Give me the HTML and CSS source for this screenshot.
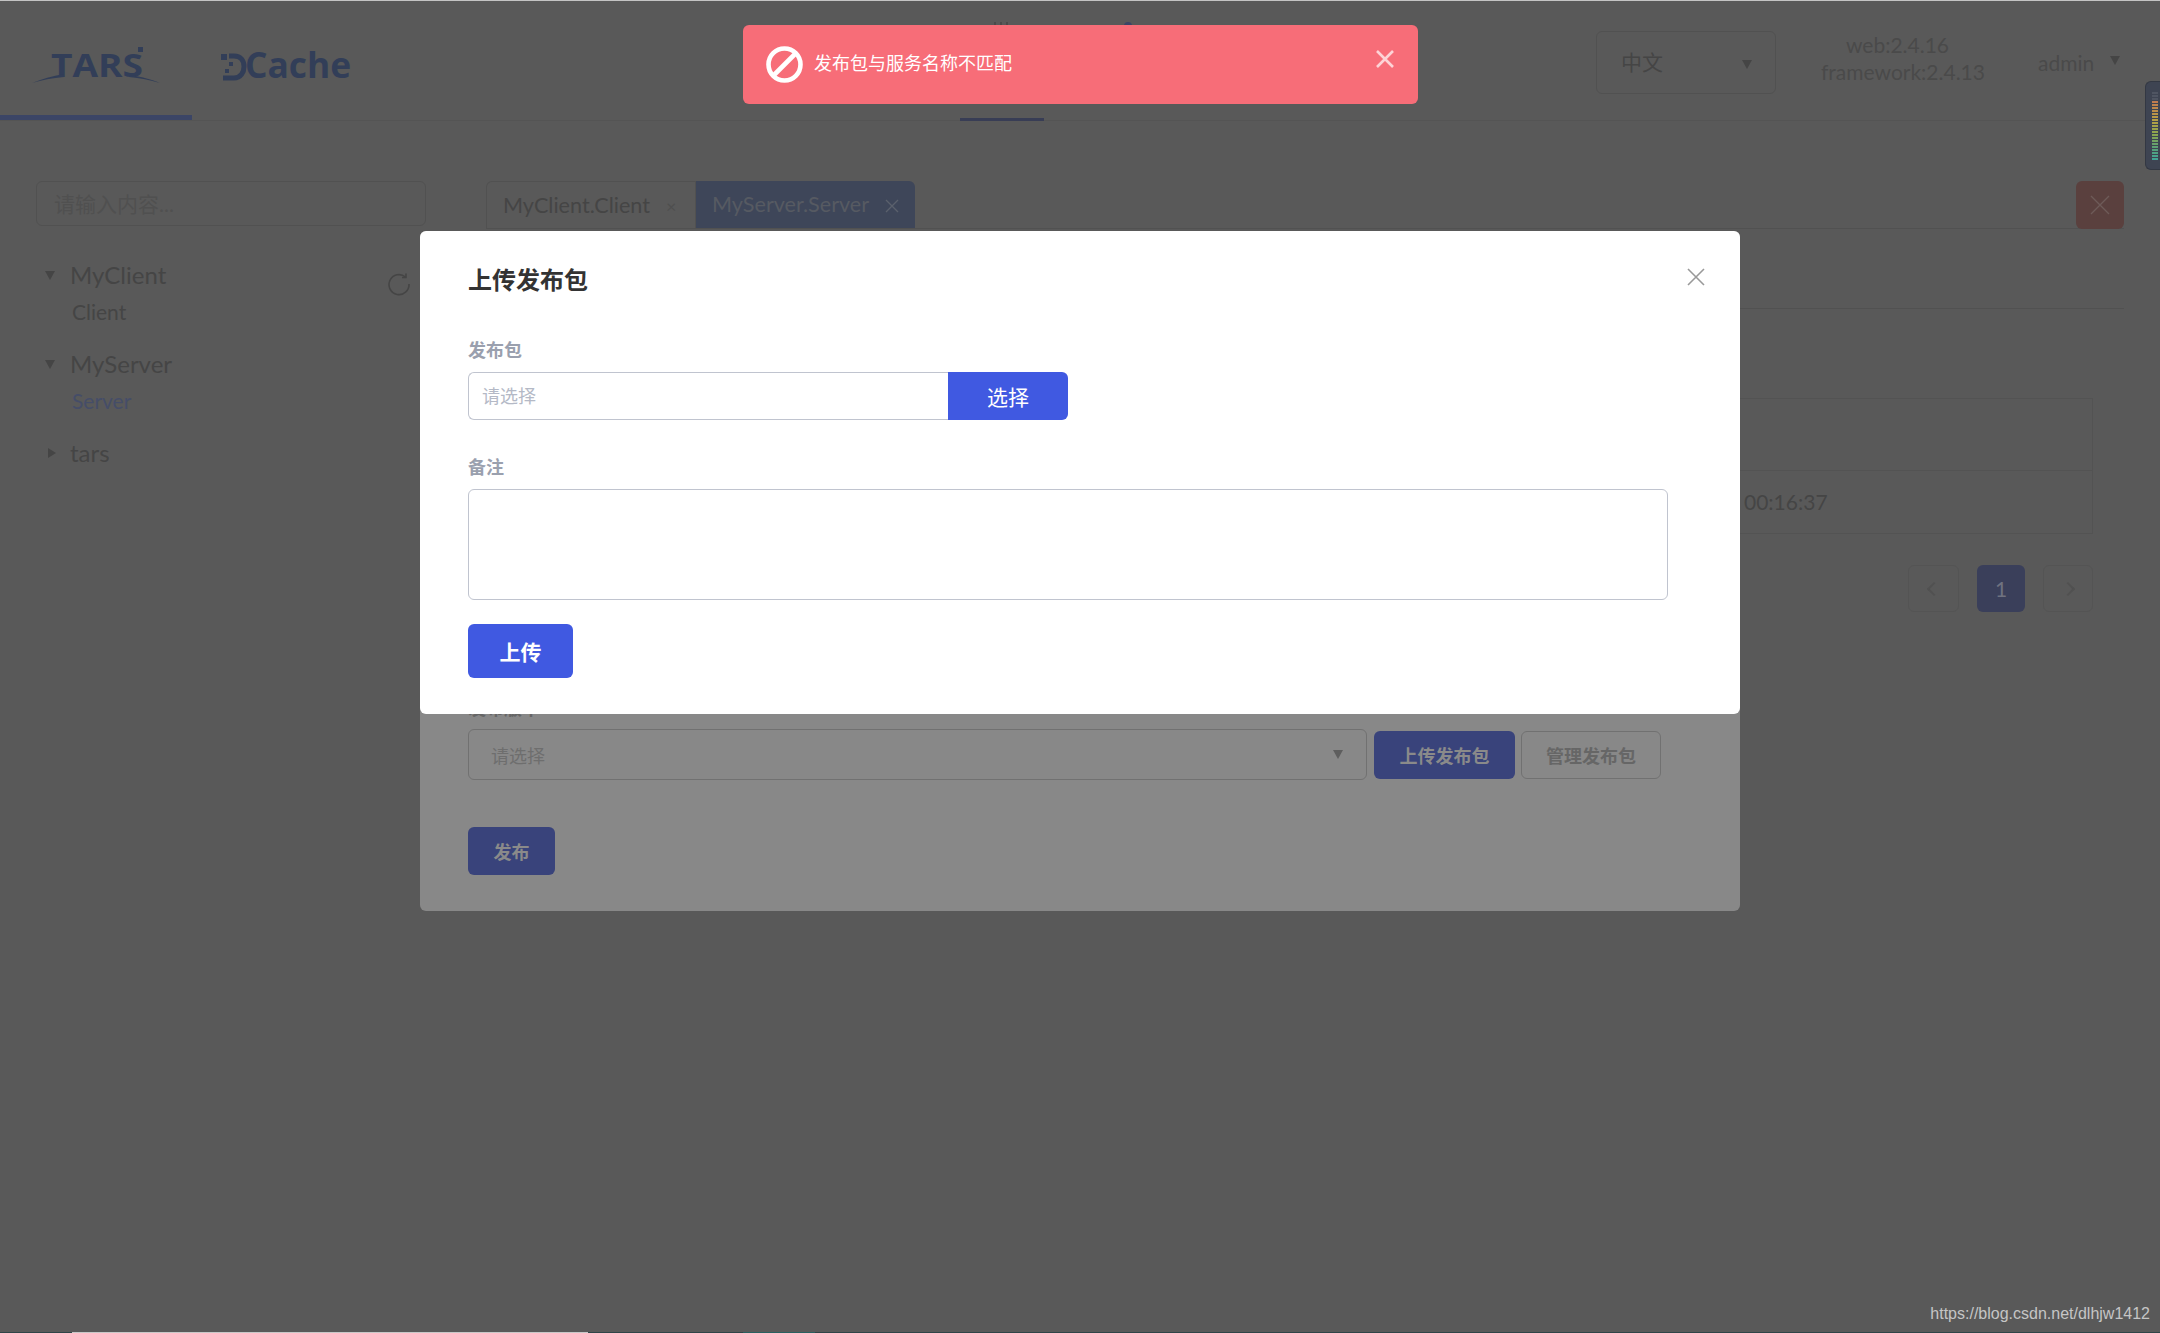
FILE: index.html
```html
<!DOCTYPE html>
<html lang="zh-CN">
<head>
    <meta charset="UTF-8">
    <title>TARS</title>
    <link rel="stylesheet" href="styles.css">
</head>
<body>
    <div class="page">
        <div class="header">
            <div class="brand-tab active">
                <svg width="130" height="64" viewBox="0 -17 130 64">
                    <text x="19" y="30" class="logo-tars-text" textLength="92" lengthAdjust="spacingAndGlyphs">TARS</text>
                    <rect x="106" y="0" width="5" height="5"/>
                    <path d="M0 36 C10 32 20 29 32 27 L32 30 C20 31 10 33 0 36 Z"/>
                    <path d="M128 36 C118 32 110 30 98 28 L97 30 C108 31 118 33 128 36 Z"/>
                </svg>
            </div>
            <div class="brand-tab second">
                <svg width="132" height="64" viewBox="0 -17 132 64">
                    <rect x="1" y="2" width="6" height="6"/>
                    <rect x="9" y="10" width="4" height="4"/>
                    <rect x="5" y="17" width="4" height="4"/>
                    <path class="logo-d" d="M9 4 H14 C21 4 24 9 24 14.5 C24 20 21 26 14 26 H3"/>
                    <text x="25" y="26" class="logo-cache-text" textLength="106" lengthAdjust="spacingAndGlyphs">Cache</text>
                </svg>
            </div>
            <div class="nav">
                <div class="nav-item active"><span class="nav-bars"></span></div>
                <div class="nav-item"><span class="nav-dot"></span></div>
            </div>
            <div class="lang-select">
                <span>中文</span>
                <i class="caret"></i>
            </div>
            <div class="version">
                <div class="version-web">web:2.4.16</div>
                <div>framework:2.4.13</div>
            </div>
            <div class="user">
                <span>admin</span>
                <i class="caret"></i>
            </div>
        </div>

        <div class="main">
            <div class="sidebar">
                <div class="search-box">请输入内容...</div>
                <div class="tree">
                    <svg class="refresh" width="24" height="24" viewBox="0 0 24 24">
                        <path d="M18.5 5 A10 10 0 1 0 22 12"/>
                        <path d="M19 1.5 V5.5 H15"/>
                    </svg>
                    <div class="tree-node"><i class="caret"></i>MyClient</div>
                    <div class="tree-leaf">Client</div>
                    <div class="tree-node"><i class="caret"></i>MyServer</div>
                    <div class="tree-leaf current">Server</div>
                    <div class="tree-node"><i class="caret closed"></i>tars</div>
                </div>
            </div>

            <div class="content">
                <div class="tabs">
                    <div class="tab">MyClient.Client<span class="tab-x">×</span></div>
                    <div class="tab current">MyServer.Server
                        <svg class="tab-close" width="14" height="14" viewBox="0 0 14 14"><path d="M1 1 L13 13 M13 1 L1 13"/></svg>
                    </div>
                    <div class="close-all">
                        <svg width="22" height="22" viewBox="0 0 22 22"><path d="M2 2 L20 20 M20 2 L2 20"/></svg>
                    </div>
                </div>
                <div class="subnav"></div>
                <div class="table">
                    <div class="table-head"></div>
                    <div class="table-row">00:16:37</div>
                </div>
                <div class="pager">
                    <div class="pager-btn arrow"><i class="chevron left"></i></div>
                    <div class="pager-btn current">1</div>
                    <div class="pager-btn arrow next"><i class="chevron right"></i></div>
                </div>
            </div>
        </div>
    </div>

    <!-- publish dialog, dimmed by the upload dialog on top of it -->
    <div class="dialog dialog-back">
        <div class="back-label">发布版本</div>
        <div class="back-row">
            <div class="back-select">
                <span>请选择</span>
                <i class="caret"></i>
            </div>
            <div class="btn btn-back">上传发布包</div>
            <div class="btn btn-back-plain">管理发布包</div>
        </div>
        <div class="btn btn-back publish">发布</div>
    </div>

    <div class="dialog dialog-upload">
        <svg class="dialog-close" width="18" height="18" viewBox="0 0 18 18"><path d="M1 1 L17 17 M17 1 L1 17"/></svg>
        <div class="dialog-title">上传发布包</div>
        <label class="field-label">发布包</label>
        <div class="file-picker">
            <input class="file-input" type="text" placeholder="请选择">
            <div class="btn-pick">选择</div>
        </div>
        <label class="field-label second">备注</label>
        <textarea class="note"></textarea>
        <div class="btn-upload">上传</div>
    </div>

    <div class="toast">
        <svg class="toast-icon" width="37" height="37" viewBox="0 0 37 37">
            <circle cx="18.5" cy="18.5" r="16"/>
            <path d="M7 30 L30 7"/>
        </svg>
        <span class="toast-text">发布包与服务名称不匹配</span>
        <svg class="toast-close" width="20" height="20" viewBox="0 0 20 20"><path d="M2 2 L18 18 M18 2 L2 18"/></svg>
    </div>

    <div class="meter"><div class="meter-leds"></div></div>
    <div class="watermark">https://blog.csdn.net/dlhjw1412</div>

    <div class="taskbar">
        <span class="task-a"></span>
        <span class="task-b"></span>
        <span class="task-c"></span>
        <span class="task-d"></span>
        <span class="task-e"></span>
    </div>
</body>
</html>
```

FILE: styles.css
```css
* {
    box-sizing: border-box;
}

html, body {
    height: 100%;
}

body {
    margin: 0;
    position: relative;
    overflow: hidden;
    height: 1333px;
    background-color: #595959;
    color: #454545;
    font-family: 'Lato', 'Noto Sans CJK SC', sans-serif;
    font-size: 21px;
    border-top: 1px solid #c4c4c4;
}

.caret {
    display: inline-block;
    width: 0;
    height: 0;
    border-left: 5px solid transparent;
    border-right: 5px solid transparent;
    border-top: 9px solid #454545;
}

.caret.closed {
    border-top: 5px solid transparent;
    border-bottom: 5px solid transparent;
    border-left: 8px solid #454545;
    border-right: 0;
}

/* header */
.header {
    display: flex;
    height: 120px;
    border-bottom: 1px solid #545454;
    align-items: center;
}

.brand-tab {
    height: 119px;
    display: flex;
    align-items: center;
    fill: #323e58;
}

.brand-tab svg {
    overflow: visible;
}

.brand-tab.active {
    width: 192px;
    border-bottom: 5px solid #3b4566;
    padding-left: 32px;
    padding-top: 8px;
}

.brand-tab.second {
    width: 190px;
    padding-top: 12px;
    padding-left: 28px;
}

.logo-tars-text {
    font-family: 'Open Sans', sans-serif;
    font-size: 33px;
    font-weight: 700;
}

.logo-cache-text {
    font-family: 'Open Sans', sans-serif;
    font-size: 35px;
    font-weight: 700;
}

.logo-d {
    fill: none;
    stroke: #323e58;
    stroke-width: 5;
}

.nav {
    display: flex;
    gap: 42px;
    margin-left: 578px;
    align-self: stretch;
}

.nav-item {
    width: 84px;
    height: 120px;
    padding-top: 21px;
    display: flex;
    justify-content: center;
}

.nav-item.active {
    border-bottom: 3px solid #383d55;
}

.nav-bars {
    width: 16px;
    height: 8px;
    background: repeating-linear-gradient(90deg, #4a4a4a 0 2px, transparent 2px 6px);
}

.nav-dot {
    width: 8px;
    height: 8px;
    border-radius: 50%;
    background-color: #3b4566;
}

.lang-select {
    width: 180px;
    height: 63px;
    margin-left: 426px;
    margin-top: 4px;
    padding: 0 23px 0 24px;
    border: 1px solid #515151;
    border-radius: 6px;
    display: flex;
    align-items: center;
    justify-content: space-between;
}

.lang-select span {
    margin-top: -4px;
}

.lang-select .caret {
    margin-top: 3px;
}

.version {
    margin-left: 45px;
    margin-bottom: 5px;
    width: 164px;
    line-height: 27px;
    text-align: center;
    color: #4a4a4a;
    white-space: nowrap;
}

.version-web {
    padding-right: 11px;
}

.user {
    margin-left: 53px;
    margin-top: 3px;
    color: #4a4a4a;
    display: flex;
    align-items: center;
    gap: 16px;
}

.user .caret {
    margin-top: -4px;
}

/* page body */
.main {
    display: flex;
    padding: 60px 36px 0;
    gap: 60px;
}

.sidebar {
    width: 390px;
    flex-shrink: 0;
}

.search-box {
    height: 45px;
    border: 1px solid #515151;
    border-radius: 6px;
    padding: 0 17px;
    line-height: 43px;
    color: #505050;
}

.tree {
    position: relative;
    padding-top: 28px;
}

.refresh {
    position: absolute;
    left: 351px;
    top: 46px;
    fill: none;
    stroke: #454545;
    stroke-width: 1.6;
}

.tree-node {
    display: flex;
    align-items: center;
    height: 40px;
    font-size: 24px;
    margin-top: 0;
}

.tree-node .caret {
    margin: 2px 15px 0 9px;
}

.tree-node .caret.closed {
    margin: 2px 14px 0 12px;
}

.tree-leaf {
    height: 49px;
    padding-left: 36px;
    line-height: 36px;
}

.tree-leaf.current {
    color: #454d68;
}

.content {
    flex: 1;
    min-width: 0;
}

.tabs {
    display: flex;
    height: 48px;
    border-bottom: 1px solid #515151;
}

.tab {
    height: 47px;
    padding-left: 16px;
    line-height: 47px;
    font-size: 21.6px;
    border: 1px solid #515151;
    border-bottom: 0;
    width: 210px;
    border-radius: 6px 0 0 0;
    color: #454545;
    white-space: nowrap;
}

.tab-x {
    margin-left: 16px;
    color: #4f4f4f;
    font-size: 18px;
}

.tab.current {
    width: 219px;
    padding-left: 16px;
    background-color: #3e4659;
    color: #565a62;
    border: 0;
    border-radius: 0 6px 0 0;
}

.tab-close {
    margin-left: 11px;
    fill: none;
    stroke: #5a606c;
    stroke-width: 1.4;
    vertical-align: -1px;
}

.close-all {
    margin-left: auto;
    width: 48px;
    height: 48px;
    background-color: #5a403e;
    border-radius: 6px;
    display: flex;
    align-items: center;
    justify-content: center;
}

.close-all svg {
    fill: none;
    stroke: #6e5a58;
    stroke-width: 1.4;
}

.subnav {
    height: 80px;
    border-bottom: 1px solid #515151;
}

.table {
    margin: 89px 31px 0;
    border: 1px solid #535353;
}

.table-head {
    height: 72px;
    border-bottom: 1px solid #535353;
}

.table-row {
    height: 62px;
    line-height: 62px;
    padding-left: 1226px;
    color: #454545;
}

.pager {
    display: flex;
    justify-content: flex-end;
    gap: 18px;
    margin: 31px 31px 0 0;
}

.pager-btn {
    width: 51px;
    height: 47px;
    border: 1px solid #545454;
    border-radius: 6px;
    display: flex;
    align-items: center;
    justify-content: center;
}

.pager-btn.next {
    width: 50px;
}

.pager-btn.current {
    width: 48px;
    border: 0;
    background-color: #3a3f5a;
    color: #6f7280;
}

.chevron {
    width: 10px;
    height: 10px;
    border-left: 2px solid #515151;
    border-bottom: 2px solid #515151;
}

.chevron.left {
    transform: rotate(45deg);
}

.chevron.right {
    transform: rotate(225deg);
}

/* dialogs */
.dialog {
    position: absolute;
    left: 420px;
    top: 230px;
    width: 1320px;
    padding: 0 48px;
    border-radius: 6px;
}

.dialog-back {
    height: 680px;
    background-color: #888888;
    padding-bottom: 36px;
    display: flex;
    flex-direction: column;
    justify-content: flex-end;
    align-items: flex-start;
}

.back-label {
    height: 24px;
    line-height: 24px;
    font-size: 18px;
    font-weight: 700;
    color: #666;
    margin-bottom: 9px;
}

.back-row {
    display: flex;
    align-items: center;
    margin-bottom: 47px;
}

.back-select {
    width: 899px;
    height: 51px;
    border: 1px solid #717171;
    border-radius: 6px;
    padding: 0 22px;
    font-size: 18px;
    color: #6e6e6e;
    display: flex;
    align-items: center;
    justify-content: space-between;
}

.back-select .caret {
    border-top-color: #5e5e5e;
    margin-right: 1px;
}

.btn {
    height: 48px;
    border-radius: 6px;
    font-size: 18px;
    font-weight: 700;
    display: flex;
    align-items: center;
    justify-content: center;
}

.btn-back {
    width: 141px;
    margin-left: 7px;
    background-color: #39437b;
    color: #8a8a8a;
}

.btn-back-plain {
    width: 140px;
    margin-left: 6px;
    border: 1px solid #717171;
    color: #666;
}

.btn-back.publish {
    width: 87px;
    margin-left: 0;
}

.dialog-upload {
    height: 483px;
    background-color: #fff;
    color: #333;
    padding-top: 31px;
}

.dialog-close {
    position: absolute;
    right: 35px;
    top: 37px;
    fill: none;
    stroke: #999;
    stroke-width: 1.6;
}

.dialog-title {
    font-size: 24px;
    font-weight: 700;
    line-height: 36px;
}

.field-label {
    display: block;
    margin-top: 40px;
    font-size: 18px;
    font-weight: 700;
    line-height: 24px;
    color: #9aa0ae;
}

.field-label.second {
    margin-top: 35px;
}

.file-picker {
    display: flex;
    width: 600px;
    height: 48px;
    margin-top: 10px;
}

.file-input {
    flex: 1;
    min-width: 0;
    padding: 0 13px;
    border: 1px solid #c0c4cf;
    border-right: 0;
    border-radius: 6px 0 0 6px;
    font-family: inherit;
    font-size: 18px;
    outline: none;
}

.file-input::placeholder {
    color: #b4b9c6;
}

.btn-pick {
    width: 120px;
    background-color: #4059e1;
    color: #fff;
    border-radius: 0 6px 6px 0;
    display: flex;
    align-items: center;
    justify-content: center;
}

.note {
    display: block;
    width: 1200px;
    height: 111px;
    margin-top: 10px;
    border: 1px solid #c0c4cf;
    border-radius: 6px;
    resize: none;
    outline: none;
}

.btn-upload {
    width: 105px;
    height: 54px;
    margin-top: 24px;
    background-color: #4059e1;
    color: #fff;
    font-weight: 700;
    border-radius: 6px;
    display: flex;
    align-items: center;
    justify-content: center;
}

/* toast */
.toast {
    position: absolute;
    left: 743px;
    top: 24px;
    width: 675px;
    height: 79px;
    padding: 0 23px;
    background-color: #f76d78;
    border-radius: 6px;
    display: flex;
    align-items: center;
    color: #fff;
}

.toast-icon {
    flex-shrink: 0;
    fill: none;
    stroke: #fff;
    stroke-width: 4.6;
}

.toast-text {
    margin-left: 11px;
    margin-top: -6px;
    font-size: 18px;
}

.toast-close {
    margin-left: auto;
    margin-top: -12px;
    fill: none;
    stroke: #fdd3d6;
    stroke-width: 2.6;
}

/* overlays from the screenshot */
.meter {
    position: absolute;
    right: 0;
    top: 80px;
    width: 15px;
    height: 89px;
    padding: 10px 2px 8px 6px;
    background-color: #3e4452;
    border-radius: 6px 0 0 6px;
    border: 1px solid #333843;
    border-right: 0;
}

.meter-leds {
    height: 100%;
    background:
        repeating-linear-gradient(180deg, transparent 0 2px, #3e4452 2px 3px),
        linear-gradient(180deg, #4f5562 0 12%, #c07a50 13%, #b89f45 40%, #8aa650 62%, #58a078 82%, #3fa59a 100%);
}

.watermark {
    position: absolute;
    right: 10px;
    top: 1303px;
    font-family: 'Liberation Sans', sans-serif;
    font-size: 16px;
    line-height: 20px;
    color: #c5c5c5;
}

.taskbar {
    position: absolute;
    left: 0;
    right: 0;
    bottom: 0;
    height: 1px;
    display: flex;
    background-color: #2f4447;
}

.task-a {
    width: 72px;
}

.task-b {
    width: 516px;
    background-color: #c8c8c8;
}

.task-c {
    width: 155px;
}

.task-d {
    width: 72px;
    background-color: #2a6060;
}

.task-e {
    flex: 1;
}
```
